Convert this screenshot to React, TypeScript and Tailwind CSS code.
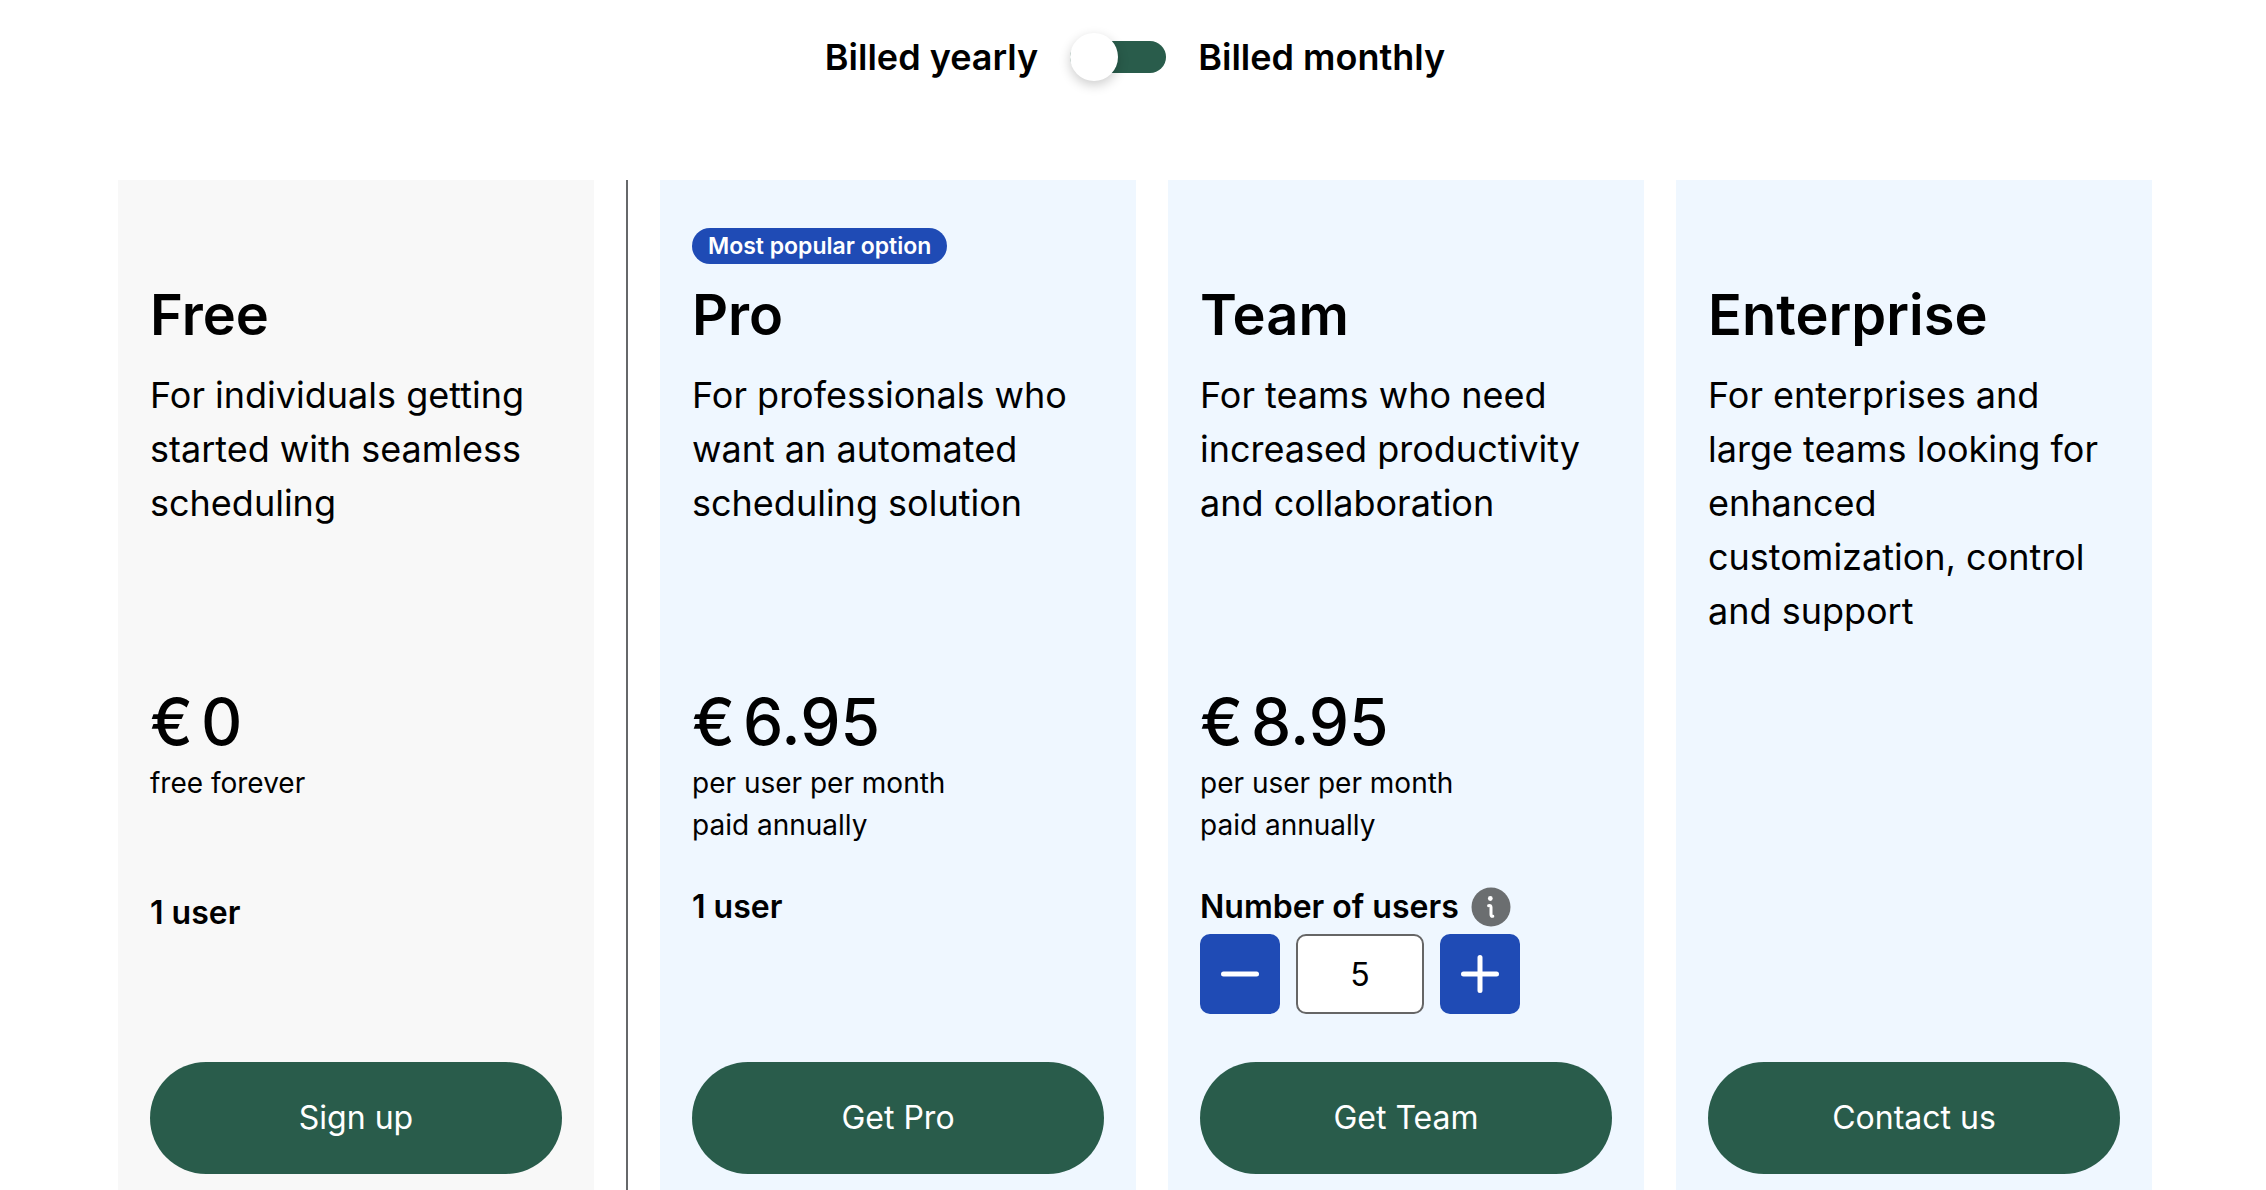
import { useState } from "react";

type Plan = {
  name: string;
  description: string;
  cta: string;
  price?: string;
  terms?: string[];
  users?: "single" | "stepper";
  badge?: string;
  free?: boolean;
};

const plans: Plan[] = [
  {
    name: "Free",
    description: "For individuals getting started with seamless scheduling",
    price: "0",
    terms: ["free forever"],
    users: "single",
    cta: "Sign up",
    free: true,
  },
  {
    name: "Pro",
    description: "For professionals who want an automated scheduling solution",
    price: "6.95",
    terms: ["per user per month", "paid annually"],
    users: "single",
    cta: "Get Pro",
    badge: "Most popular option",
  },
  {
    name: "Team",
    description: "For teams who need increased productivity and collaboration",
    price: "8.95",
    terms: ["per user per month", "paid annually"],
    users: "stepper",
    cta: "Get Team",
  },
  {
    name: "Enterprise",
    description: "For enterprises and large teams looking for enhanced customization, control and support",
    cta: "Contact us",
  },
];

function BillingToggle() {
  const [monthly, setMonthly] = useState(false);
  return (
    <div className="flex h-12 items-center justify-center gap-8 text-[36px] font-semibold">
      <label htmlFor="billing">Billed yearly</label>
      <span className="relative flex h-8 w-24 items-center">
        <input
          id="billing"
          type="checkbox"
          role="switch"
          aria-label="Bill monthly"
          checked={monthly}
          onChange={(e) => setMonthly(e.target.checked)}
          className="peer h-8 w-24 cursor-pointer appearance-none rounded-full bg-[#295c4b]"
        />
        <span className="pointer-events-none absolute left-0 size-12 rounded-full bg-white shadow-[0_4px_12px_rgba(0,0,0,0.2)] peer-checked:left-12" />
      </span>
      <label htmlFor="billing">Billed monthly</label>
    </div>
  );
}

function InfoIcon() {
  return (
    <svg viewBox="0 0 40 40" className="size-10" aria-hidden="true">
      <circle cx="20" cy="20" r="19.5" fill="#6b6e70" />
      <circle cx="19.3" cy="11.5" r="2.4" fill="#fff" />
      <path
        d="M17.6 18.6c1.700-.4 2.400.2 2.400 1.700v6.900c0 1.600.6 2.300 1.800 2.100"
        fill="none"
        stroke="#fff"
        strokeWidth="3"
        strokeLinecap="round"
        strokeLinejoin="round"
      />
    </svg>
  );
}

function UserStepper() {
  const [count, setCount] = useState(5);
  const button = "flex size-20 items-center justify-center rounded-[10px] bg-[#1f4bb5] text-white";
  return (
    <>
      <div className="flex h-12 items-center gap-3">
        <label htmlFor="users" className="text-[32px] font-semibold whitespace-nowrap">
          Number of users
        </label>
        <button type="button" aria-label="About the number of users">
          <InfoIcon />
        </button>
      </div>
      <div className="mt-[3px] flex gap-4">
        <button type="button" aria-label="Remove a user" className={button} onClick={() => setCount(Math.max(1, count - 1))}>
          <svg viewBox="0 0 40 40" className="size-10" stroke="currentColor" strokeWidth="5" strokeLinecap="round">
            <path d="M3.500 20h33" />
          </svg>
        </button>
        <input
          id="users"
          type="text"
          inputMode="numeric"
          value={count}
          onChange={(e) => setCount(Number(e.target.value) || 1)}
          className="h-20 w-32 rounded-[10px] border-2 border-[#666666] bg-white text-center text-[32px]"
        />
        <button type="button" aria-label="Add a user" className={button} onClick={() => setCount(count + 1)}>
          <svg viewBox="0 0 40 40" className="size-10" stroke="currentColor" strokeWidth="5" strokeLinecap="round">
            <path d="M3.500 20h33M20 3.500v33" />
          </svg>
        </button>
      </div>
    </>
  );
}

function PlanCard({ plan }: { plan: Plan }) {
  return (
    <article className={`flex min-w-0 flex-1 flex-col px-8 pt-12 pb-4 ${plan.free ? "bg-[#f8f8f8]" : "bg-[#eff7ff]"}`}>
      <div className="flex h-9">
        {plan.badge && (
          <span className="flex items-center rounded-full bg-[#1f4bb5] px-4 text-[23px] font-semibold whitespace-nowrap text-white">
            {plan.badge}
          </span>
        )}
      </div>
      <h2 className="mt-[15px] text-[56px] leading-[72px] font-semibold">{plan.name}</h2>
      <p className="mt-[17px] min-h-[270px] text-[36px] leading-[54px]">{plan.description}</p>
      <div className="mt-11 h-[164px]">
        {plan.price && (
          <p className="flex gap-2 text-[64px] leading-[80px] font-medium">
            <span>€</span>
            <span>{plan.price}</span>
          </p>
        )}
        {plan.terms?.map((line) => (
          <p key={line} className="text-[28px] leading-[42px]">
            {line}
          </p>
        ))}
      </div>
      <div className="mt-[37px] h-[131px]">
        {plan.users === "single" && (
          <p className={`text-[32px] leading-[48px] font-semibold ${plan.free ? "pt-1.5" : ""}`}>1 user</p>
        )}
        {plan.users === "stepper" && <UserStepper />}
      </div>
      <button type="button" className="mt-12 h-28 rounded-full bg-[#295c4b] text-[32px] text-white">
        {plan.cta}
      </button>
    </article>
  );
}

export default function App() {
  const [free, ...paid] = plans;
  return (
    <main className="flex min-h-screen flex-col bg-white pt-[33px] pr-[114px] pl-[118px] font-['Inter',sans-serif] text-black">
      <BillingToggle />
      <div className="mt-[99px] flex flex-1 gap-8">
        <PlanCard plan={free} />
        <div className="w-0.5 bg-[#66686a]" />
        {paid.map((plan) => (
          <PlanCard key={plan.name} plan={plan} />
        ))}
      </div>
    </main>
  );
}
